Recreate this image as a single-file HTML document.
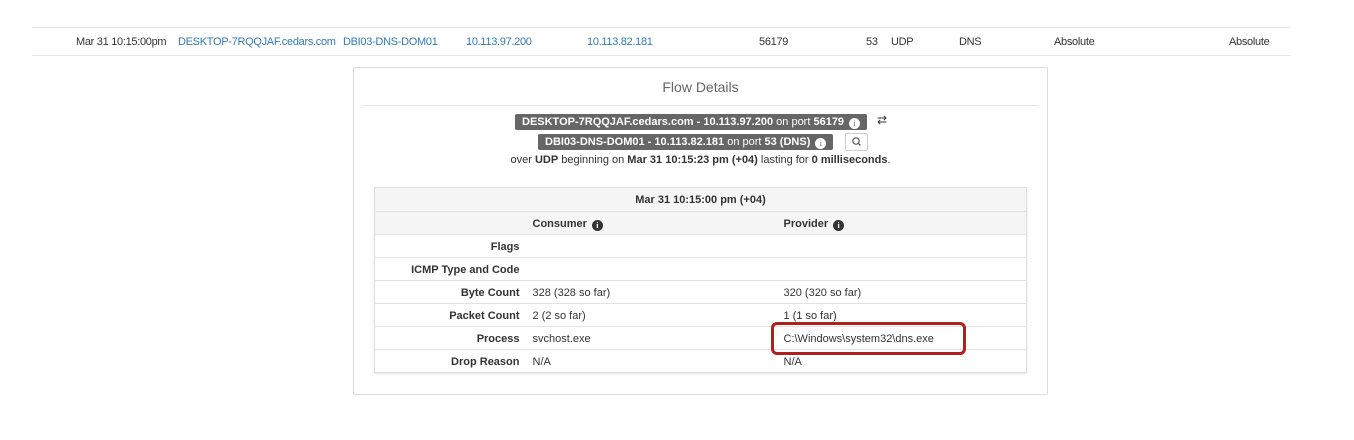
<!DOCTYPE html>
<html><head><style>
body{margin:0;width:1354px;height:440px;background:#fff;font-family:"Liberation Sans",Arial,sans-serif;font-size:11px;color:#333;position:relative;overflow:hidden}
.a{position:absolute;white-space:nowrap}
.t{letter-spacing:-0.3px}
.l{color:#337ab7}
.badge{position:absolute;background:#666;color:#fff;font-weight:bold;font-size:11px;height:16px;line-height:16px;padding:0 7px;border-radius:2px;white-space:nowrap}
.badge span{font-weight:normal}
.i{display:inline-block;width:11px;height:11px;border-radius:50%;background:#fff;color:#666;font-size:8px;line-height:11px;text-align:center;font-weight:bold;font-family:"Liberation Serif",serif;vertical-align:-1px;margin-left:5px}
.ib{background:#333;color:#fff}
table{position:absolute;left:374px;top:187px;width:653px;border-collapse:collapse;border:1px solid #ddd;box-shadow:0 1px 2px rgba(0,0,0,.1);table-layout:fixed}
td{height:20px;padding:2px 7px 0;border-top:1px solid #e3e3e3;font-size:11px;line-height:13px}
td.k{text-align:right;font-weight:bold;padding-right:6px}
.g td{background:#f5f5f5}
</style></head><body>
<div class="a" style="left:32px;top:27px;width:1258px;height:1px;background:#e5e5e5"></div>
<div class="a" style="left:32px;top:55px;width:1258px;height:1px;background:#e5e5e5"></div>
<div class="a t" style="left:76px;top:36px">Mar 31 10:15:00pm</div>
<div class="a l t" style="left:178px;top:36px">DESKTOP-7RQQJAF.cedars.com</div>
<div class="a l t" style="left:343px;top:36px">DBI03-DNS-DOM01</div>
<div class="a l t" style="left:466px;top:36px">10.113.97.200</div>
<div class="a l t" style="left:587px;top:36px">10.113.82.181</div>
<div class="a t" style="left:759px;top:36px">56179</div>
<div class="a t" style="left:866px;top:36px">53</div>
<div class="a t" style="left:891px;top:36px">UDP</div>
<div class="a t" style="left:959px;top:36px">DNS</div>
<div class="a t" style="left:1054px;top:36px">Absolute</div>
<div class="a t" style="left:1229px;top:36px">Absolute</div>

<div class="a" style="left:353px;top:67px;width:693px;height:326px;border:1px solid #ddd;border-radius:2px"></div>
<div class="a" style="left:353px;top:79px;width:695px;text-align:center;font-size:14px;color:#666">Flow Details</div>
<div class="a" style="left:362px;top:105px;width:677px;height:1px;background:#e5e5e5"></div>

<div class="badge" style="left:515px;top:114px">DESKTOP-7RQQJAF.cedars.com - 10.113.97.200 <span>on port</span> 56179<span class="i">i</span></div>
<div class="a" style="left:877px;top:113px;font-size:12px;color:#333">⇄</div>
<div class="badge" style="left:538px;top:134px">DBI03-DNS-DOM01 - 10.113.82.181 <span>on port</span> 53 (DNS)<span class="i">i</span></div>
<div class="a" style="left:845px;top:133px;width:21px;height:16px;border:1px solid #ccc;border-radius:2px;background:#fff">
<svg width="21" height="16" viewBox="0 0 21 16"><circle cx="10" cy="7" r="3.2" fill="none" stroke="#555" stroke-width="1.2"/><line x1="12.3" y1="9.3" x2="14.5" y2="11.5" stroke="#555" stroke-width="1.3"/></svg></div>
<div class="a" style="left:353px;top:154px;width:695px;text-align:center">over <b>UDP</b> beginning on <b>Mar 31 10:15:23 pm (+04)</b> lasting for <b>0 milliseconds</b>.</div>

<table>
<colgroup><col style="width:151px"><col style="width:251px"><col></colgroup>
<tr class="g"><td colspan="3" style="text-align:center;font-weight:bold;height:21px;border-top:none">Mar 31 10:15:00 pm (+04)</td></tr>
<tr class="g"><td class="k"></td><td style="font-weight:bold">Consumer<span class="i ib">i</span></td><td style="font-weight:bold">Provider<span class="i ib">i</span></td></tr>
<tr><td class="k">Flags</td><td></td><td></td></tr>
<tr><td class="k">ICMP Type and Code</td><td></td><td></td></tr>
<tr><td class="k">Byte Count</td><td>328 (328 so far)</td><td>320 (320 so far)</td></tr>
<tr><td class="k">Packet Count</td><td>2 (2 so far)</td><td>1 (1 so far)</td></tr>
<tr><td class="k">Process</td><td>svchost.exe</td><td>C:\Windows\system32\dns.exe</td></tr>
<tr><td class="k">Drop Reason</td><td>N/A</td><td>N/A</td></tr>
</table>
<div class="a" style="left:771px;top:322px;width:189px;height:27px;border:3px solid #b0201e;border-radius:6px"></div>
</body></html>
